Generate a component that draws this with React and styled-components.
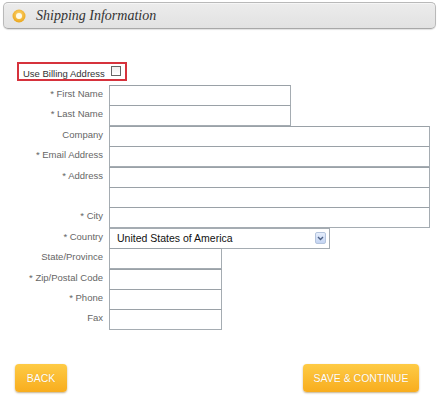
import React from "react";
import styled, { createGlobalStyle } from "styled-components";

const Global = createGlobalStyle`
  html, body { margin: 0; padding: 0; background: #fff; }
  body { font-family: "Liberation Sans", Arial, sans-serif; }
`;

const Page = styled.div`
  width: 438px;
  height: 396px;
  display: flex;
  flex-direction: column;
  box-sizing: border-box;
  padding-top: 2px;
`;

const Header = styled.div`
  margin: 0 2px 0 3px;
  height: 27px;
  box-sizing: border-box;
  border: 1px solid #b9b9b9;
  border-bottom-color: #a8a8a8;
  border-radius: 5px;
  background: linear-gradient(#ececec, #e2e2e2);
  box-shadow: inset 0 1px 0 #f6f6f6, 0 1px 1px rgba(0,0,0,0.12);
  display: flex;
  align-items: center;
  gap: 10px;
  padding-left: 8px;
`;

const Title = styled.span`
  font-family: "Liberation Serif", "Times New Roman", serif;
  font-style: italic;
  font-size: 14px;
  color: #333;
`;

const Billing = styled.label`
  align-self: flex-start;
  margin: 33px 0 0 17px;
  width: 110px;
  height: 19px;
  box-sizing: border-box;
  border: 2px solid #d6323c;
  display: flex;
  align-items: flex-start;
  padding: 4px 0 0 4px;
  font-size: 9.5px;
  color: #333;
  gap: 6px;
  white-space: nowrap;
`;

const Check = styled.span`
  width: 8px;
  height: 8px;
  border: 1px solid #666;
  background: linear-gradient(#eee, #fff);
  margin-top: -2px;
`;

const Form = styled.div`
  margin-top: 4px;
  display: grid;
  grid-template-columns: 103px auto;
  column-gap: 6px;
  grid-auto-rows: 20.42px;
`;

const Label = styled.div`
  text-align: right;
  font-size: 9.5px;
  color: #666;
  padding-top: 3px;
  white-space: nowrap;
`;

const Input = styled.div`
  width: ${(p) => p.$w}px;
  height: 21px;
  box-sizing: border-box;
  border: 1px solid #a5acb2;
  border-top-color: #9aa1a7;
  background: #fff;
`;

const Select = styled.div`
  width: ${(p) => p.$w}px;
  height: 21px;
  box-sizing: border-box;
  border: 1px solid #a5acb2;
  background: #fff;
  display: flex;
  align-items: center;
  justify-content: space-between;
  padding: 0 3px 0 7px;
  font-size: 10.5px;
  color: #111;
`;

const Arrow = styled.span`
  width: 11px;
  height: 12px;
  box-sizing: border-box;
  border: 1px solid #b4c4dd;
  border-radius: 2px;
  background: linear-gradient(#e6eefc, #c4d4f2);
  display: flex;
  align-items: center;
  justify-content: center;
`;

const Buttons = styled.div`
  margin-top: 34px;
  display: flex;
  justify-content: space-between;
  padding: 0 19px 0 15px;
`;

const Button = styled.button`
  height: 28px;
  width: ${(p) => p.$w}px;
  padding: 0;
  border: none;
  border-radius: 4px;
  background: linear-gradient(#fecb45, #f8ad1e);
  box-shadow: 0 1px 2px rgba(120, 80, 0, 0.45);
  color: #fff;
  font-family: "Liberation Sans", Arial, sans-serif;
  font-size: 10.5px;
  text-shadow: 0 0 1px rgba(160,100,0,0.3);
  cursor: pointer;
`;

const fields = [
  ["* First Name", 182],
  ["* Last Name", 182],
  ["Company", 321],
  ["* Email Address", 321],
  ["* Address", 321],
  ["", 321],
  ["* City", 321],
  ["* Country", 221, true],
  ["State/Province", 113],
  ["* Zip/Postal Code", 113],
  ["* Phone", 113],
  ["Fax", 113],
];

export default function App() {
  return (
    <>
      <Global />
      <Page>
        <Header>
          <svg width="14" height="14" viewBox="0 0 14 14">
            <defs>
              <radialGradient id="g" cx="50%" cy="40%" r="60%">
                <stop offset="0%" stopColor="#ffd978" />
                <stop offset="100%" stopColor="#eaa51a" />
              </radialGradient>
            </defs>
            <circle cx="7" cy="7" r="6.5" fill="url(#g)" />
            <circle cx="7" cy="7" r="3" fill="#fffbe8" />
          </svg>
          <Title>Shipping Information</Title>
        </Header>
        <Billing>
          Use Billing Address
          <Check />
        </Billing>
        <Form>
          {fields.map(([label, w, sel], i) => (
            <React.Fragment key={i}>
              <Label>{label}</Label>
              {sel ? (
                <Select $w={w}>
                  United States of America
                  <Arrow>
                    <svg width="7" height="5" viewBox="0 0 7 5">
                      <path d="M1 1 L3.5 3.5 L6 1" stroke="#4d6185" strokeWidth="1.4" fill="none" />
                    </svg>
                  </Arrow>
                </Select>
              ) : (
                <Input $w={w} />
              )}
            </React.Fragment>
          ))}
        </Form>
        <Buttons>
          <Button $w={52}>BACK</Button>
          <Button $w={116}>SAVE &amp; CONTINUE</Button>
        </Buttons>
      </Page>
    </>
  );
}
